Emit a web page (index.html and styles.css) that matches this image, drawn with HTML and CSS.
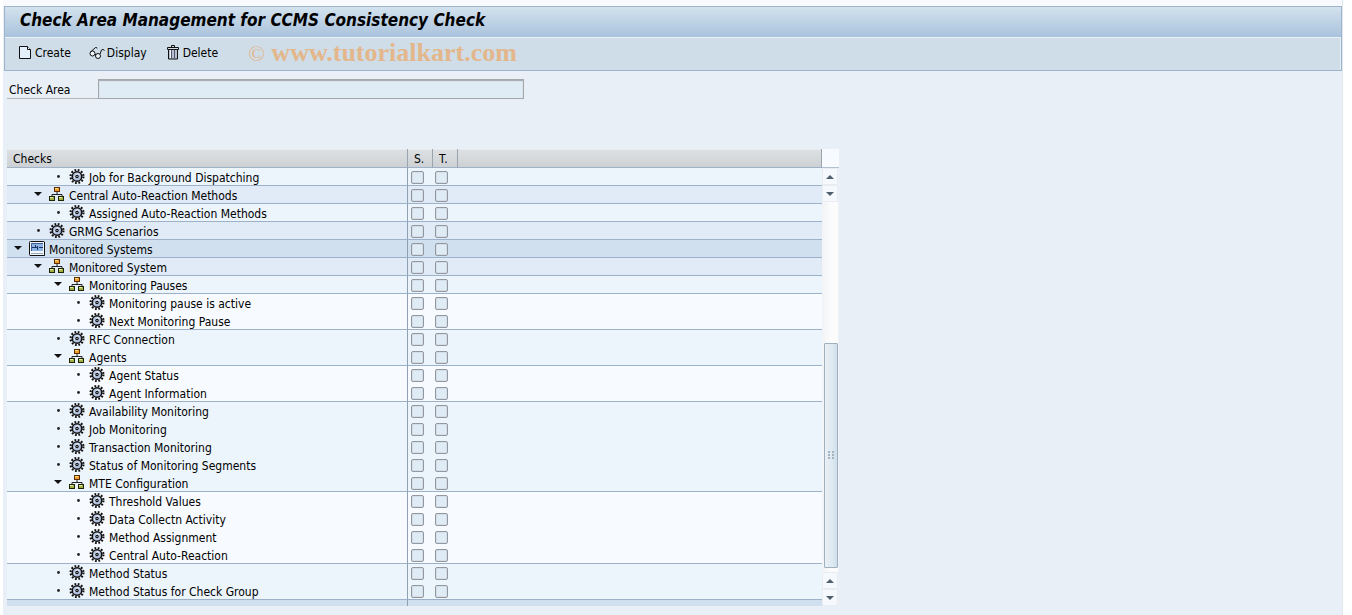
FILE: index.html
```
<!DOCTYPE html>
<html lang="en">
  <head>
    <meta charset="UTF-8" />
    <meta name="viewport" content="width=device-width, initial-scale=1.0" />
    <title>Check Area Management for CCMS Consistency Check</title>
    <link rel="stylesheet" href="styles.css">
  </head>
  <body>
    <svg class="sprite" aria-hidden="true">
      <symbol id="icon-gear" viewBox="0 0 16 16">
        <circle cx="8" cy="7.500" r="6.400" fill="none" stroke="#111" stroke-width="2.200" stroke-dasharray="1.750 1.600" />
        <circle cx="8" cy="7.500" r="4.700" fill="#b3c2df" stroke="#111" stroke-width="1.500" />
        <path d="M5 9.500 8 4.500l2.500 1" fill="none" stroke="#eef3fb" />
        <circle cx="8" cy="7.500" r="1.700" fill="#111" />
        <rect x="7.500" y="7" width="1" height="1" fill="#dfe8f5" />
      </symbol>
      <symbol id="icon-group" viewBox="0 0 16 16">
        <path d="M8 5v3M3 10V7.500h10V10" fill="none" stroke="#222" />
        <rect x="5.500" y=".5" width="5" height="4" fill="#f0a020" stroke="#5a2c08" />
        <path d="M6 1.500h3" stroke="#ffe08a" />
        <rect x=".5" y="9.500" width="5" height="4" fill="#a4b043" stroke="#1c2408" />
        <rect x="9.500" y="9.500" width="5" height="4" fill="#a4b043" stroke="#1c2408" />
        <path d="M1 10.500h3M10 10.500h3" stroke="#e6f2a0" />
      </symbol>
      <symbol id="icon-system" viewBox="0 0 16 16">
        <rect x=".5" y=".5" width="15" height="14" rx="1" fill="#f4f8fc" stroke="#111" />
        <rect x="2" y="2" width="12" height="8" fill="#8fb4e6" />
        <path d="M2.500 10V2.500H14" fill="none" stroke="#3b5d94" />
        <path d="M3 6.500h3M10 6.500h4M6.500 4v3M8.500 5v4M6.500 6.500h2" fill="none" stroke="#1c3560" />
        <path d="M2 12.500h12" stroke="#9aa7b5" />
        <path d="M1 14.500h14.500V1" fill="none" stroke="#111" />
      </symbol>
      <symbol id="icon-open" viewBox="0 0 8 8">
        <path d="M0 2h8L4 6z" fill="#111" />
      </symbol>
      <symbol id="icon-leaf" viewBox="0 0 8 8">
        <circle cx="4.500" cy="4.500" r="1.400" fill="#222" />
      </symbol>
    </svg>

    <main class="screen">
      <header class="app-header">
        <h1 class="title">Check Area Management for CCMS Consistency Check</h1>
        <div class="toolbar">
          <button type="button" class="tool">
            <svg class="icon" viewBox="0 0 16 16" aria-hidden="true">
              <path d="M2.500 1.500h8l3 3v9h-11z" fill="#e3f0fb" stroke="#111" />
              <path d="M10.500 1.500v3h3" fill="#fff" stroke="#111" />
            </svg>
            Create
          </button>
          <button type="button" class="tool">
            <svg class="icon" viewBox="0 0 16 16" aria-hidden="true">
              <g fill="#eef5fb" stroke="#111">
                <circle cx="3.500" cy="8.500" r="2.500" />
                <circle cx="9" cy="11" r="2.500" />
                <path d="M1.500 7 6.500 2.500q1.500-.5 1.500 1M6 9l1 1M11 9l1.500-4q1.500-1.500 3 .5" fill="none" />
              </g>
            </svg>
            Display
          </button>
          <button type="button" class="tool">
            <svg class="icon" viewBox="0 0 16 16" aria-hidden="true">
              <path d="M3.500 4.500h9v9.500h-9z" fill="#b8bfd0" stroke="#111" />
              <path d="M6.500 5v8M9.500 5v8" stroke="#50566a" />
              <path d="M5.500 5v8" stroke="#f4f6fa" />
              <path d="M2.500 2.500h11v2h-11zM6.500 2.500v-2h3v2" fill="#d5dae4" stroke="#111" />
            </svg>
            Delete
          </button>
          <span class="watermark"><span class="copyright">©</span> www.tutorialkart.com</span>
        </div>
      </header>

      <div class="field">
        <label for="check-area">Check Area</label>
        <input type="text" id="check-area">
      </div>

      <div class="tree-box">
        <table class="tree">
          <colgroup>
            <col class="col-checks">
            <col class="col-flag">
            <col class="col-flag">
            <col>
          </colgroup>
          <thead>
            <tr>
              <th>Checks</th>
              <th>S.</th>
              <th>T.</th>
              <th></th>
            </tr>
          </thead>
          <tbody id="tree-body"></tbody>
        </table>

        <div class="scroll">
          <div class="scroll-corner"></div>
          <button type="button" class="scroll-button up" aria-label="Scroll up"></button>
          <button type="button" class="scroll-button down" aria-label="Scroll down"></button>
          <div class="track">
            <div class="thumb">
              <span class="grip"></span>
            </div>
          </div>
          <button type="button" class="scroll-button up" aria-label="Page up"></button>
          <button type="button" class="scroll-button down" aria-label="Page down"></button>
        </div>
      </div>
    </main>

    <script>
      // [level, icon, name], group and system nodes are expanded
      const nodes = [
        [3, "gear", "Job for Background Dispatching"],
        [2, "group", "Central Auto-Reaction Methods"],
        [3, "gear", "Assigned Auto-Reaction Methods"],
        [2, "gear", "GRMG Scenarios"],
        [1, "system", "Monitored Systems"],
        [2, "group", "Monitored System"],
        [3, "group", "Monitoring Pauses"],
        [4, "gear", "Monitoring pause is active"],
        [4, "gear", "Next Monitoring Pause"],
        [3, "gear", "RFC Connection"],
        [3, "group", "Agents"],
        [4, "gear", "Agent Status"],
        [4, "gear", "Agent Information"],
        [3, "gear", "Availability Monitoring"],
        [3, "gear", "Job Monitoring"],
        [3, "gear", "Transaction Monitoring"],
        [3, "gear", "Status of Monitoring Segments"],
        [3, "group", "MTE Configuration"],
        [4, "gear", "Threshold Values"],
        [4, "gear", "Data Collectn Activity"],
        [4, "gear", "Method Assignment"],
        [4, "gear", "Central Auto-Reaction"],
        [3, "gear", "Method Status"],
        [3, "gear", "Method Status for Check Group"],
      ];

      const body = document.getElementById("tree-body");
      let rows = "";

      nodes.forEach(([level, icon, name], i) => {
        // a rule is drawn only where the level changes
        const next = nodes[i + 1];
        const ruled = !next || next[0] !== level ? " ruled" : "";
        const marker = icon === "gear" ? "leaf" : "open";
        rows += `
          <tr class="level-${level}${ruled}">
            <td>
              <div class="node">
                <svg class="marker"><use href="#icon-${marker}" /></svg>
                <svg class="icon"><use href="#icon-${icon}" /></svg>
                <span class="name">${name}</span>
              </div>
            </td>
            <td><input type="checkbox" aria-label="S. ${name}"></td>
            <td><input type="checkbox" aria-label="T. ${name}"></td>
            <td></td>
          </tr>`;
      });

      body.innerHTML =
        rows + '<tr class="level-1 cut"><td></td><td></td><td></td><td></td></tr>';
    </script>
  </body>
</html>
```
FILE: styles.css
```
* {
  box-sizing: border-box;
}

body {
  margin: 0;
  padding: 0 9px 0 3px;
  background-color: #fff;
  font-family: "DejaVu Sans Condensed", "Noto Sans", sans-serif;
  font-size: 12px;
  line-height: 16px;
  color: #000;
}

button,
input {
  font: inherit;
  color: inherit;
  margin: 0;
}

.sprite {
  display: none;
}

.screen {
  min-height: 100vh;
  padding: 6px 0 9px 1px;
  background: linear-gradient(#f8fafd 6px, #e8eff7 6px);
  border-right: 1px solid #dfe6ee;
}

/* Title and toolbar */
.app-header {
  border: 1px solid #9fb4ca;
  background-color: #cfdde8;
  box-shadow: inset -1px 1px 0 #e6eef5;
}

.title {
  margin: 0;
  padding: 3px 15px 7px;
  border-bottom: 1px solid #eaf2f8;
  background: linear-gradient(#d3e2ee, #a9c2dc);
  font-size: 17px;
  font-style: italic;
  font-weight: bold;
  line-height: 20px;
}

.toolbar {
  display: flex;
  align-items: center;
  height: 32px;
  padding: 0 12px 2px;
  gap: 18px;
}

.tool {
  display: flex;
  align-items: center;
  gap: 2px;
  padding: 0;
  border: 0;
  background: none;
}

.icon {
  width: 16px;
  height: 16px;
  flex: none;
}

.watermark {
  margin-left: 12px;
  color: #e3b78b;
  font-family: "Liberation Serif", serif;
  font-size: 26px;
  font-weight: bold;
  line-height: 30px;
}

.copyright {
  font-size: 22px;
  font-weight: normal;
}

/* Check area field */
.field {
  display: flex;
  width: 517px;
  max-width: 100%;
  margin: 8px 0 50px 3px;
}

.field label {
  width: 91px;
  padding: 3px 2px 0;
  border-bottom: 1px solid #b4b4b8;
}

.field input {
  flex: 1;
  height: 20px;
  padding: 0 4px;
  border: 1px solid #a5a8ab;
  background-color: #dfebf5;
  box-shadow: inset 0 1px 1px #a5a8ab;
}

/* Tree */
.tree-box {
  display: flex;
  width: 832px;
  max-width: 100%;
  margin-left: 3px;
}

.tree {
  flex: 1;
  min-width: 0;
  table-layout: fixed;
  border-collapse: separate;
  border-spacing: 0;
}

.col-checks {
  width: 401px;
}

.col-flag {
  width: 25px;
}

.tree th {
  height: 19px;
  padding: 1px 6px 0;
  border-right: 1px solid #9aa4ae;
  border-bottom: 1px solid #9fb1c6;
  background: linear-gradient(#dde1e4, #cdd1d4);
  box-shadow: inset 0 1px 0 #e8ebee;
  font-weight: normal;
  text-align: left;
}

.tree td {
  height: 18px;
  padding: 0;
}

.tree td:first-child {
  border-right: 1px solid #8fa0b3;
}

.tree td + td {
  padding: 1px 0 0 3px;
}

.tree td + td + td {
  padding-left: 2px;
}

.ruled td {
  border-bottom: 1px solid #9db2ca;
}

.tree .cut td {
  height: 6px;
}

.node {
  display: flex;
  align-items: center;
  gap: 4px;
  height: 17px;
  white-space: nowrap;
}

.marker {
  width: 8px;
  height: 8px;
  margin: 0 3px 2px;
  flex: none;
}

.name {
  padding-top: 2px;
}

.level-1 {
  background-color: #d0e0ef;
}

.level-2 {
  background-color: #e1ebf7;
}

.level-3 {
  background-color: #ecf4fc;
}

.level-4 {
  background-color: #f7fbff;
}

.level-1 .node {
  padding-left: 4px;
}

.level-2 .node {
  padding-left: 24px;
}

.level-3 .node {
  padding-left: 44px;
}

.level-4 .node {
  padding-left: 64px;
}

.tree input {
  display: block;
  width: 13px;
  height: 13px;
  appearance: none;
  border: 1px solid #93989e;
  border-radius: 2px;
  background-color: #dfebf5;
  box-shadow: inset 0 0 0 1px #d3dee8;
}

.tree input:checked {
  background-color: #5b7694;
}

/* Scroll bar */
.scroll {
  display: flex;
  flex-direction: column;
  width: 17px;
  padding-right: 1px;
  background-color: #eef2f8;
}

.scroll-corner {
  height: 19px;
  margin-right: -1px;
  border-bottom: 1px solid #b5c0cd;
  background-color: #f7fbff;
}

.scroll-button {
  display: flex;
  align-items: center;
  justify-content: center;
  height: 17px;
  padding: 0;
  border: 1px solid #e9edf2;
  background-color: #f5f8fc;
}

.scroll-button::before {
  content: "";
  border: 4px solid transparent;
}

.up::before {
  border-top: 0;
  border-bottom-color: #4e5f6e;
}

.down::before {
  border-bottom: 0;
  border-top-color: #4e5f6e;
}

.track {
  display: grid;
  flex: 1;
  grid-template-rows: 141fr 226fr 4px;
  padding-left: 2px;
  background: linear-gradient(90deg, #f1f3f6, #fcfcfc 60%);
}

.thumb {
  display: flex;
  grid-row: 2;
  align-items: center;
  justify-content: center;
  border: 1px solid #9fb0be;
  border-radius: 1px;
  background: linear-gradient(90deg, #e9f0f6, #dfe9f1 60%, #cfdfea);
}

.grip {
  width: 6px;
  height: 8px;
  border-right: 2px dotted #a3b3c0;
  border-left: 2px dotted #a3b3c0;
}
```
